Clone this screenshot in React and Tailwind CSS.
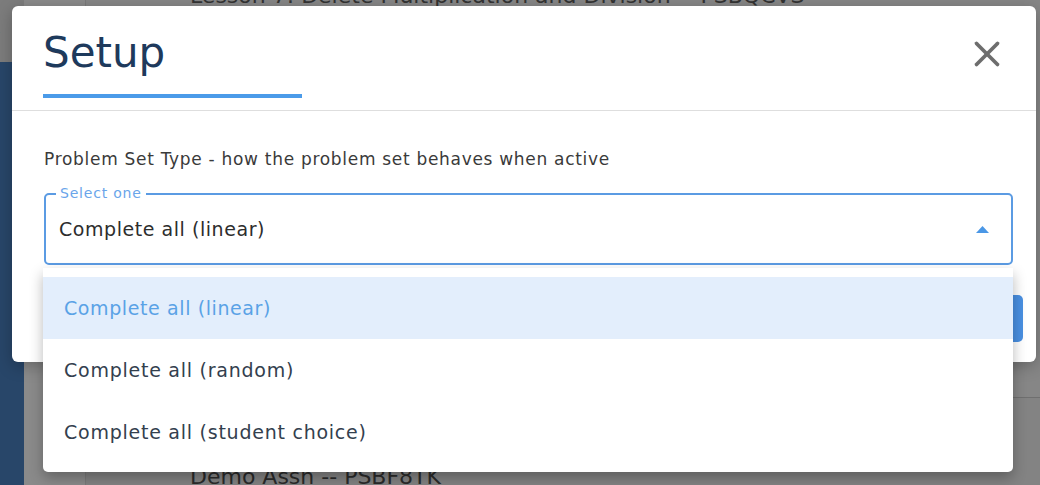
import { X } from "lucide-react";

const options = [
    "Complete all (linear)",
    "Complete all (random)",
    "Complete all (student choice)",
];

export default function App() {
    return (
        <div className="relative w-[1040px] h-[485px] overflow-hidden bg-[#868686] font-['DejaVu_Sans',sans-serif]">
            {/* dimmed page behind the dialog */}
            <div className="flex h-full">
                <div className="w-[24px] flex flex-col">
                    <div className="h-[62px] bg-[#7c7c7c] text-[#222] text-[16px] leading-none pt-[22px] -ml-[8px]">s</div>
                    <div className="flex-1 bg-[#284669]" />
                </div>
                <div className="w-[62px] bg-[#8a8a8a] border-r border-[#7a7a7a]" />
                <div className="flex-1 flex flex-col">
                    <div className="h-[20px] pl-[104px] -mt-[21px] text-[22px] text-[#333] whitespace-nowrap">
                        Lesson 7: Delete Multiplication and Division -- PSBQCVS
                    </div>
                    <div className="flex-1" />
                    <div className="h-[66px] border-t border-[#6f6f6f] bg-[#838383]" />
                    <div className="h-[22px] pl-[104px] text-[22px] leading-[28px] text-[#2b2b2b] whitespace-nowrap bg-[#838383]">
                        Demo Assn -- PSBF8TK
                    </div>
                </div>
            </div>

            {/* dialog */}
            <div className="absolute left-[12px] top-[6px] w-[1024px] h-[356px] bg-white rounded-[6px] shadow-[0_4px_16px_rgba(0,0,0,0.25)]">
                <div className="relative h-[105px] border-b border-[#dedede] px-[31px]">
                    <h1 className="pt-[22px] text-[42px] leading-[50px] text-[#1e3a5c]">Setup</h1>
                    <div className="mt-[16px] w-[259px] h-[4px] bg-[#4b9be9]" />
                    <button className="absolute right-[28px] top-[27px] text-[#6d6d6d]">
                        <X size={42} strokeWidth={2.1} />
                    </button>
                </div>
                <div className="pl-[32px] pr-[23px]">
                    <p className="mt-[36px] text-[17px] leading-[24px] tracking-[0.7px] text-[#3a3a3a]">
                        Problem Set Type - how the problem set behaves when active
                    </p>
                    <div className="relative mt-[22px] h-[72px] border-2 border-[#5b9be3] rounded-[5px] flex items-center pl-[13px] pr-[22px]">
                        <span className="absolute -top-[9px] left-[10px] bg-white px-[4px] text-[14px] leading-[15px] tracking-[0.8px] text-[#6aa5ea]">Select one</span>
                        <span className="flex-1 text-[19px] tracking-[0.55px] text-[#2d2d2d]">Complete all (linear)</span>
                        <svg width="13" height="7" viewBox="0 0 13 7">
                            <path d="M0 7 L6.5 0 L13 7 Z" fill="#4a97e6" />
                        </svg>
                    </div>
                    <div className="flex justify-end mt-[30px] -mr-[10px]">
                        <button className="w-[110px] h-[47px] rounded-[5px] bg-[#4a90e2] text-white text-[16px]">Save</button>
                    </div>
                </div>
            </div>

            {/* open select menu */}
            <ul className="absolute left-[43px] top-[268px] w-[970px] py-[9px] bg-white rounded-b-[5px] shadow-[0_6px_14px_rgba(0,0,0,0.28)]">
                {options.map((opt, i) => (
                    <li
                        key={opt}
                        className={
                            i === 0
                                ? "h-[62px] flex items-center px-[21px] text-[19px] tracking-[0.6px] bg-[#e3eefc] text-[#5aa2e6]"
                                : "h-[62px] flex items-center px-[21px] text-[19px] tracking-[0.75px] text-[#33404e]"
                        }
                    >
                        {opt}
                    </li>
                ))}
            </ul>
        </div>
    );
}
